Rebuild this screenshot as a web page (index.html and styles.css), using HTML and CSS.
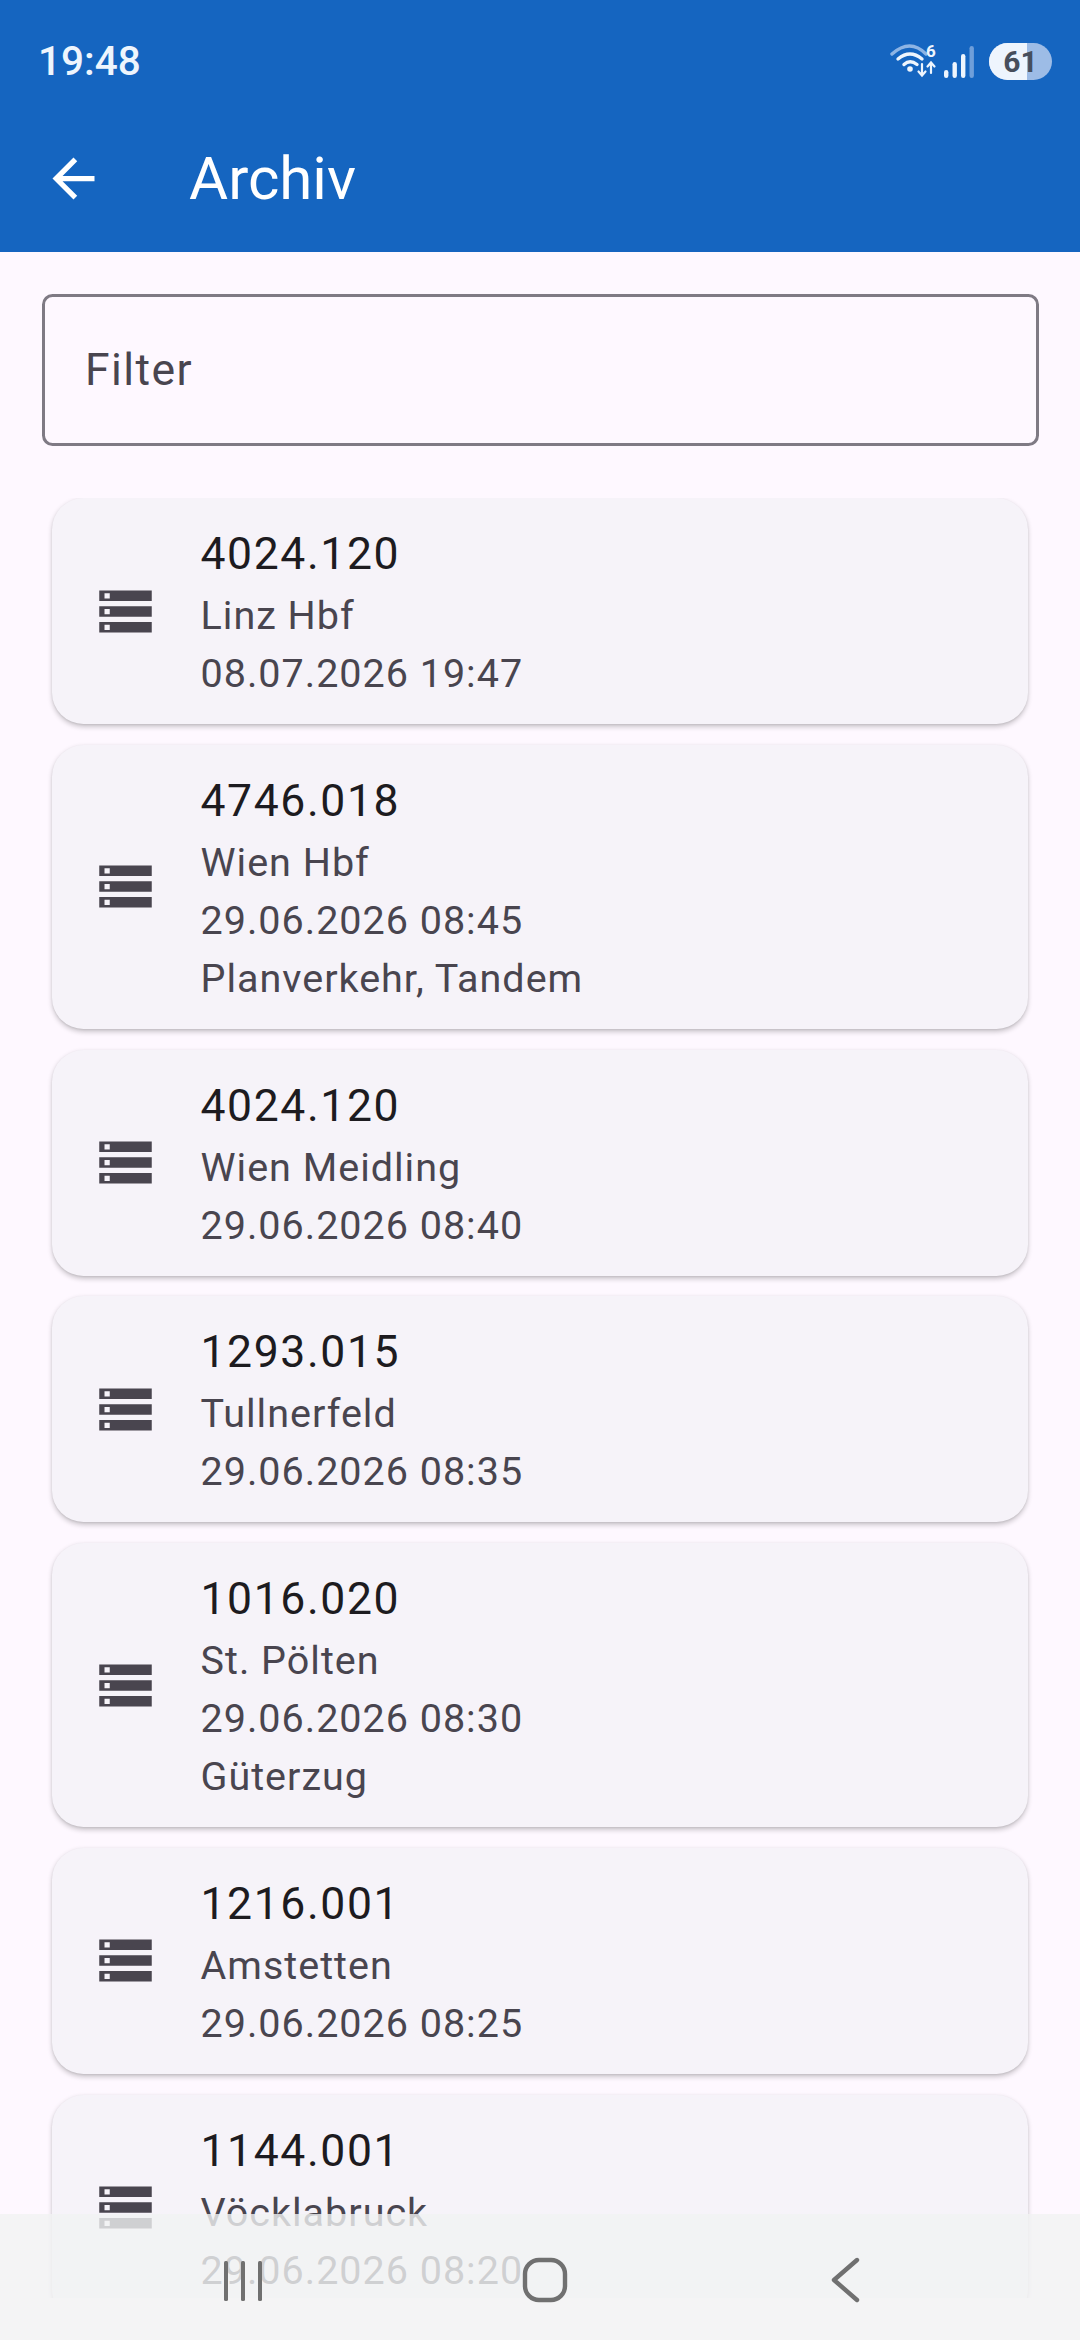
FILE: index.html
```html
<!doctype html>
<html lang="de">
<head>
<meta charset="utf-8">
<title>Archiv</title>
<meta name="viewport" content="width=device-width, initial-scale=1">
<link rel="stylesheet" href="styles.css">
</head>
<body>

<header class="appbar">
  <div class="status">
    <span class="time">19:48</span>
    <div class="status-icons">
      <svg class="wifi" width="50" height="40" viewBox="0 0 50 40" fill="none" stroke="#eef5fd" stroke-linecap="round">
        <path d="M3 13Q21 -3 37 13" stroke="#8db4e4" stroke-width="3.4"/>
        <path d="M9 18Q21 8 33 18" stroke-width="3.4"/>
        <path d="M15 23.5Q21 18 28 23.5" stroke-width="3.4"/>
        <circle cx="21" cy="28" r="2.8" fill="#eef5fd" stroke="none"/>
        <path d="M33 23V34M29.5 30.5 33 34.5 36.5 30.5" stroke-width="2.2"/>
        <path d="M42 32V22M38.5 25.5 42 21.5 45.5 25.5" stroke-width="2.2"/>
        <text class="wifi-num" x="42" y="16" text-anchor="middle">6</text>
      </svg>
      <svg class="signal" width="34" height="36" viewBox="0 0 34 36" fill="#eef5fd">
        <rect x="2" y="27" width="4.4" height="8" rx="2.2"/>
        <rect x="10.5" y="19" width="4.4" height="16" rx="2.2"/>
        <rect x="19" y="11" width="4.4" height="24" rx="2.2"/>
        <rect x="27.5" y="3" width="4.4" height="32" rx="2.2" fill="#6f9fda"/>
      </svg>
      <div class="battery"><span class="battery-fill"></span><span class="battery-num">61</span></div>
    </div>
  </div>
  <div class="toolbar">
    <div class="leading">
      <svg width="63" height="63" viewBox="0 0 24 24" fill="#fff"><path d="M20 11H7.83l5.59-5.59L12 4l-8 8 8 8 1.41-1.41L7.83 13H20v-2z"/></svg>
    </div>
    <h1>Archiv</h1>
  </div>
</header>

<div class="filter"><span>Filter</span></div>

<main class="list">
  <article class="card">
    <svg class="card-icon" viewBox="0 0 24 24"><path d="M2 20h20v-4H2v4zm2-3h2v2H4v-2zM2 4v4h20V4H2zm4 3H4V5h2v2zm-4 7h20v-4H2v4zm2-3h2v2H4v-2z"/></svg>
    <div class="card-text">
      <div class="card-title">4024.120</div>
      <div class="card-sub">Linz Hbf</div>
      <div class="card-sub">08.07.2026 19:47</div>
    </div>
  </article>
  <article class="card">
    <svg class="card-icon" viewBox="0 0 24 24"><path d="M2 20h20v-4H2v4zm2-3h2v2H4v-2zM2 4v4h20V4H2zm4 3H4V5h2v2zm-4 7h20v-4H2v4zm2-3h2v2H4v-2z"/></svg>
    <div class="card-text">
      <div class="card-title">4746.018</div>
      <div class="card-sub">Wien Hbf</div>
      <div class="card-sub">29.06.2026 08:45</div>
      <div class="card-sub">Planverkehr, Tandem</div>
    </div>
  </article>
  <article class="card">
    <svg class="card-icon" viewBox="0 0 24 24"><path d="M2 20h20v-4H2v4zm2-3h2v2H4v-2zM2 4v4h20V4H2zm4 3H4V5h2v2zm-4 7h20v-4H2v4zm2-3h2v2H4v-2z"/></svg>
    <div class="card-text">
      <div class="card-title">4024.120</div>
      <div class="card-sub">Wien Meidling</div>
      <div class="card-sub">29.06.2026 08:40</div>
    </div>
  </article>
  <article class="card">
    <svg class="card-icon" viewBox="0 0 24 24"><path d="M2 20h20v-4H2v4zm2-3h2v2H4v-2zM2 4v4h20V4H2zm4 3H4V5h2v2zm-4 7h20v-4H2v4zm2-3h2v2H4v-2z"/></svg>
    <div class="card-text">
      <div class="card-title">1293.015</div>
      <div class="card-sub">Tullnerfeld</div>
      <div class="card-sub">29.06.2026 08:35</div>
    </div>
  </article>
  <article class="card">
    <svg class="card-icon" viewBox="0 0 24 24"><path d="M2 20h20v-4H2v4zm2-3h2v2H4v-2zM2 4v4h20V4H2zm4 3H4V5h2v2zm-4 7h20v-4H2v4zm2-3h2v2H4v-2z"/></svg>
    <div class="card-text">
      <div class="card-title">1016.020</div>
      <div class="card-sub">St. Pölten</div>
      <div class="card-sub">29.06.2026 08:30</div>
      <div class="card-sub">Güterzug</div>
    </div>
  </article>
  <article class="card">
    <svg class="card-icon" viewBox="0 0 24 24"><path d="M2 20h20v-4H2v4zm2-3h2v2H4v-2zM2 4v4h20V4H2zm4 3H4V5h2v2zm-4 7h20v-4H2v4zm2-3h2v2H4v-2z"/></svg>
    <div class="card-text">
      <div class="card-title">1216.001</div>
      <div class="card-sub">Amstetten</div>
      <div class="card-sub">29.06.2026 08:25</div>
    </div>
  </article>
  <article class="card">
    <svg class="card-icon" viewBox="0 0 24 24"><path d="M2 20h20v-4H2v4zm2-3h2v2H4v-2zM2 4v4h20V4H2zm4 3H4V5h2v2zm-4 7h20v-4H2v4zm2-3h2v2H4v-2z"/></svg>
    <div class="card-text">
      <div class="card-title">1144.001</div>
      <div class="card-sub">Vöcklabruck</div>
      <div class="card-sub">29.06.2026 08:20</div>
    </div>
  </article>
</main>

<!-- system nav, translucent over the list -->
<nav class="navbar">
  <svg width="46" height="44" viewBox="0 0 46 44" fill="#707070">
    <rect x="4" y="2" width="4" height="40" rx="1.5"/>
    <rect x="21" y="2" width="4" height="40" rx="1.5"/>
    <rect x="38" y="2" width="4" height="40" rx="1.5"/>
  </svg>
  <svg width="46" height="46" viewBox="0 0 46 46" fill="none" stroke="#707070" stroke-width="4.4">
    <rect x="3" y="3" width="40" height="40" rx="14"/>
  </svg>
  <svg width="46" height="46" viewBox="0 0 46 46" fill="none" stroke="#707070" stroke-width="4.4" stroke-linecap="round" stroke-linejoin="round">
    <path d="M33 3 10 23 33 43"/>
  </svg>
</nav>

</body>
</html>
```
FILE: styles.css
```css
:root{--blue:#1565c0;--bg:#fef8ff;--card:#f6f3f9;--ink:#1d1b20;--ink2:#49454f;}
html,body{margin:0;height:100%;}
body{position:relative;width:1080px;height:2340px;overflow:hidden;display:flex;flex-direction:column;background:var(--bg);font-family:Roboto,"Noto Sans",sans-serif;color:var(--ink);}

/* app bar */
.appbar{flex:none;height:252px;background:var(--blue);color:#fff;}
.status{height:105px;box-sizing:border-box;padding:17px 28px 0 38px;display:flex;align-items:center;justify-content:space-between;}
.time{font-size:40.5px;font-weight:500;color:#eef5fd;}
.status-icons{display:flex;align-items:center;gap:6px;}
.wifi{margin-right:-3px;}
.wifi-num{font:700 17px Roboto,sans-serif;fill:#eef5fd;stroke:none;}
.battery{position:relative;width:63px;height:37px;margin-left:7px;border-radius:19px;overflow:hidden;background:#9dbce6;display:flex;align-items:center;justify-content:center;}
.battery-fill{position:absolute;left:0;top:0;bottom:0;width:38px;background:#eef5fd;}
.battery-num{position:relative;font-size:30px;font-weight:700;color:#474f5c;}
.toolbar{height:147px;display:flex;align-items:center;}
.leading{width:147px;display:flex;justify-content:center;}
h1{margin:0 0 0 42px;font-size:60px;font-weight:400;}

/* filter box */
.filter{flex:none;box-sizing:border-box;height:152px;margin:42px 41px 52px 42px;padding:0 40px;display:flex;align-items:center;border:3px solid #7f7a84;border-radius:10.5px;font-size:44.5px;letter-spacing:1.4px;color:var(--ink2);}

/* cards */
.list{flex:none;height:1800px;overflow:hidden;padding:0 52px;display:flex;flex-direction:column;gap:20.75px;}
.card{flex:none;display:flex;align-items:center;gap:43.5px;padding:23px 42px 21px;background:var(--card);border-radius:31.5px;box-shadow:0 2.6px 5px rgba(0,0,0,.2),0 1px 2px rgba(0,0,0,.08);}
.card-icon{flex:none;width:63px;height:63px;margin-top:-2px;fill:var(--ink2);}
.card-title{font-size:44.5px;line-height:66px;letter-spacing:1.6px;color:var(--ink);}
.card-sub{font-size:39.5px;line-height:58px;letter-spacing:1px;color:var(--ink2);}

/* system nav */
.navbar{position:absolute;left:0;right:0;bottom:0;height:126px;box-sizing:border-box;padding:0 0 37px 9px;display:flex;align-items:flex-end;justify-content:center;gap:256px;background:rgba(241,243,243,.8);}
```
